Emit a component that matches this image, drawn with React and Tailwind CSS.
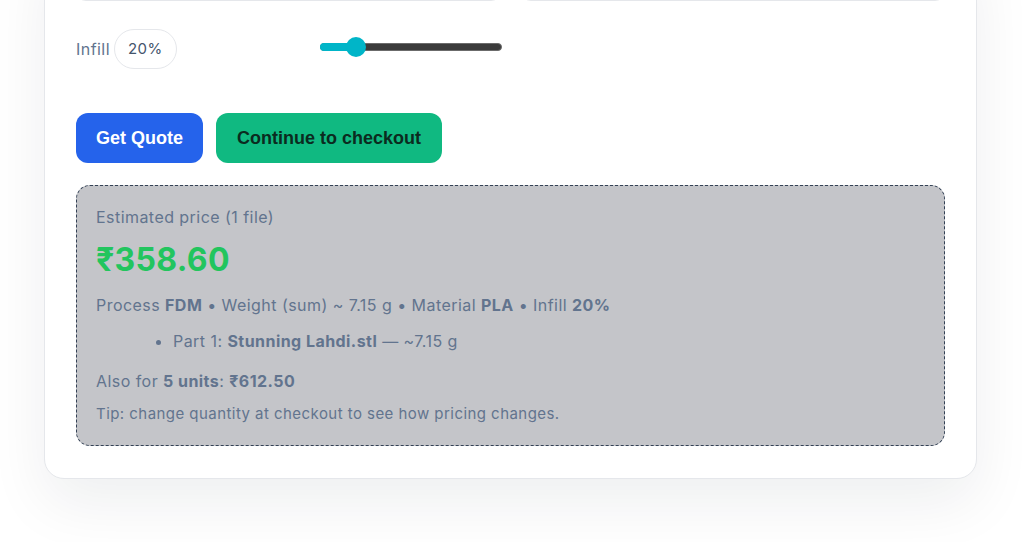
import React from 'react';

const font = { fontFamily: 'Inter, "Noto Sans", sans-serif' };

const Slider = () => {
  return (
    <div className="relative w-[182px] h-[20px] flex items-center">
      <div className="w-full h-[8px] rounded-full bg-[#3b3b3b] border border-[#6b6b6b]" />
      <div className="absolute left-0 h-[8px] w-[36px] rounded-l-full bg-[#00b5c8]" />
      <div className="absolute left-[26px] top-0 w-[20px] h-[20px] rounded-full bg-[#00b5c8]" />
    </div>
  );
};

export default function App() {
  return (
    <div className="min-h-screen bg-white overflow-hidden tracking-[0.45px]" style={font}>
      <div className="ml-[44px] w-[933px] -mt-[60px] rounded-[20px] border border-gray-200 bg-white px-[31px] pt-[15px] pb-[32px] shadow-[0_24px_60px_rgba(15,23,42,0.07)]">
        {/* top inputs (cut off) */}
        <div className="grid grid-cols-2 gap-5">
          <div className="h-[45px] rounded-[10px] border border-gray-200 bg-white" />
          <div className="h-[45px] rounded-[10px] border border-gray-200 bg-white" />
        </div>

        {/* infill row */}
        <div className="mt-[28px] grid grid-cols-[244px_182px] items-center h-[40px]">
          <div className="flex items-center gap-[4px]">
            <span className="text-[16px] text-slate-500">Infill</span>
            <span className="h-[40px] px-[13px] rounded-full border border-gray-200 flex items-center text-[15px] text-slate-600">
              20%
            </span>
          </div>
          <div className="-mt-[4px]">
            <Slider />
          </div>
        </div>

        {/* actions */}
        <div className="mt-[44px] flex items-center gap-[13px] tracking-normal" style={{ fontFamily: '"Liberation Sans", Arial, sans-serif' }}>
          <button className="h-[50px] w-[127px] rounded-[12px] bg-[#2563eb] text-white font-bold text-[18px]">
            Get Quote
          </button>
          <button className="h-[50px] w-[226px] rounded-[12px] bg-[#10b981] text-[#0b2b20] font-bold text-[18px]">
            Continue to checkout
          </button>
        </div>

        {/* estimate */}
        <div className="mt-[22px] rounded-[14px] border border-dashed border-[#334155] bg-[#c4c5c9] px-[19px] pt-[19px] pb-[21px] text-slate-500">
          <div className="text-[16px] leading-[24px]">Estimated price (1 file)</div>
          <div className="mt-[11px] text-[32px] leading-[40px] font-bold tracking-[0.3px] text-[#22c55e]">₹358.60</div>
          <div className="mt-[13px] text-[16px] leading-[24px]">
            Process <b className="font-bold">FDM</b> • Weight (sum) ~ 7.15 g • Material <b className="font-bold">PLA</b> • Infill <b className="font-bold">20%</b>
          </div>
          <ul className="mt-[12px] list-disc pl-[77px] text-[16px] leading-[24px]">
            <li>
              Part 1: <b className="font-bold">Stunning Lahdi.stl</b> — ~7.15 g
            </li>
          </ul>
          <div className="mt-[16px] text-[16px] leading-[24px]">
            Also for <b className="font-bold">5 units</b>: <b className="font-bold">₹612.50</b>
          </div>
          <div className="mt-[11px] text-[15px] leading-[20px]">
            Tip: change quantity at checkout to see how pricing changes.
          </div>
        </div>
      </div>
    </div>
  );
}
